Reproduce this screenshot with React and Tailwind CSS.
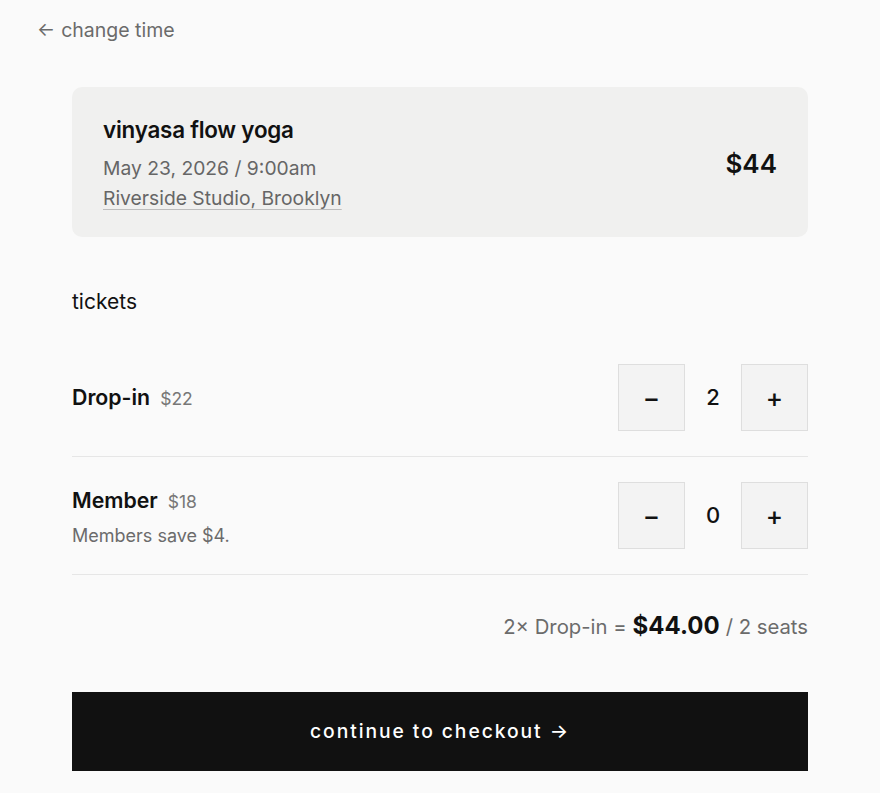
import { useState } from 'react';

const tickets = [
  { id: 'dropin', name: 'Drop-in', price: 22 },
  { id: 'member', name: 'Member', price: 18, note: 'Members save $4.' },
];

function Stepper({ value, onDec, onInc }) {
  return (
    <div className="flex items-center">
      <button
        onClick={onDec}
        className="w-[67px] h-[67px] flex items-center justify-center bg-[#f3f3f3] border border-[#dedede] text-[26px] font-medium text-[#111]"
      >
        −
      </button>
      <span className="w-[56px] text-center text-[22px] font-medium text-[#111]">{value}</span>
      <button
        onClick={onInc}
        className="w-[67px] h-[67px] flex items-center justify-center bg-[#f3f3f3] border border-[#dedede] text-[26px] font-medium text-[#111]"
      >
        +
      </button>
    </div>
  );
}

export default function App() {
  const [counts, setCounts] = useState({ dropin: 2, member: 0 });

  const change = (id, d) =>
    setCounts(prev => ({ ...prev, [id]: Math.max(0, prev[id] + d) }));

  const seats = counts.dropin + counts.member;
  const total = counts.dropin * 22 + counts.member * 18;

  return (
    <div className="min-h-[793px] bg-[#fafafa] font-['Inter',sans-serif] text-[#111] pb-6">
      <div className="pl-[37px] pt-[16px]">
        <a href="#" className="inline-flex items-center gap-[6px] text-[19.5px] text-[#6b6b6b]">
          <span className="text-[19px]">←</span>
          change time
        </a>
      </div>

      <div className="mx-[72px] mt-[42px]">
        <div className="flex items-center justify-between bg-[#f0f0ef] rounded-[10px] pl-[31px] pr-[31px] pt-[28px] pb-[25px]">
          <div>
            <h1 className="text-[22.4px] font-semibold leading-[30px] tracking-[-0.01em]">vinyasa flow yoga</h1>
            <p className="mt-[9px] text-[19.3px] leading-[28px] text-[#666]">May 23, 2026 / 9:00am</p>
            <a href="#" className="mt-[2px] inline-block text-[19.3px] leading-[28px] text-[#666] underline decoration-[#bdbdbd] underline-offset-[4px]">
              Riverside Studio, Brooklyn
            </a>
          </div>
          <div className="text-[26px] font-semibold">${total}</div>
        </div>

        <h2 className="mt-[50px] text-[21px] leading-[30px]">tickets</h2>

        <div className="mt-[23px]">
          {tickets.map(t => (
            <div
              key={t.id}
              className={`flex items-center justify-between border-b border-[#e6e6e6] ${t.note ? 'pt-[25px] pb-[25px]' : 'pt-[24px] pb-[25px]'}`}
            >
              <div className={t.note ? 'pt-[2px]' : ''}>
                <div className="flex items-baseline gap-[10px]">
                  <span className="text-[21.3px] font-semibold">{t.name}</span>
                  <span className="text-[17.5px] text-[#777]">${t.price}</span>
                </div>
                {t.note && <p className="mt-[5px] text-[18px] text-[#6b6b6b]">{t.note}</p>}
              </div>
              <Stepper
                value={counts[t.id]}
                onDec={() => change(t.id, -1)}
                onInc={() => change(t.id, 1)}
              />
            </div>
          ))}
        </div>

        <div className="mt-[33px] flex items-baseline justify-end gap-[6px] text-[20.3px] text-[#6b6b6b]">
          <span>{counts.dropin}× Drop-in =</span>
          <span className="text-[24px] font-bold text-[#111]">${total.toFixed(2)}</span>
          <span>/ {seats} seats</span>
        </div>

        <button className="mt-[48px] w-full h-[79px] bg-[#111] text-white text-[19.3px] font-medium tracking-[0.1em]">
          continue to checkout →
        </button>
      </div>
    </div>
  );
}
